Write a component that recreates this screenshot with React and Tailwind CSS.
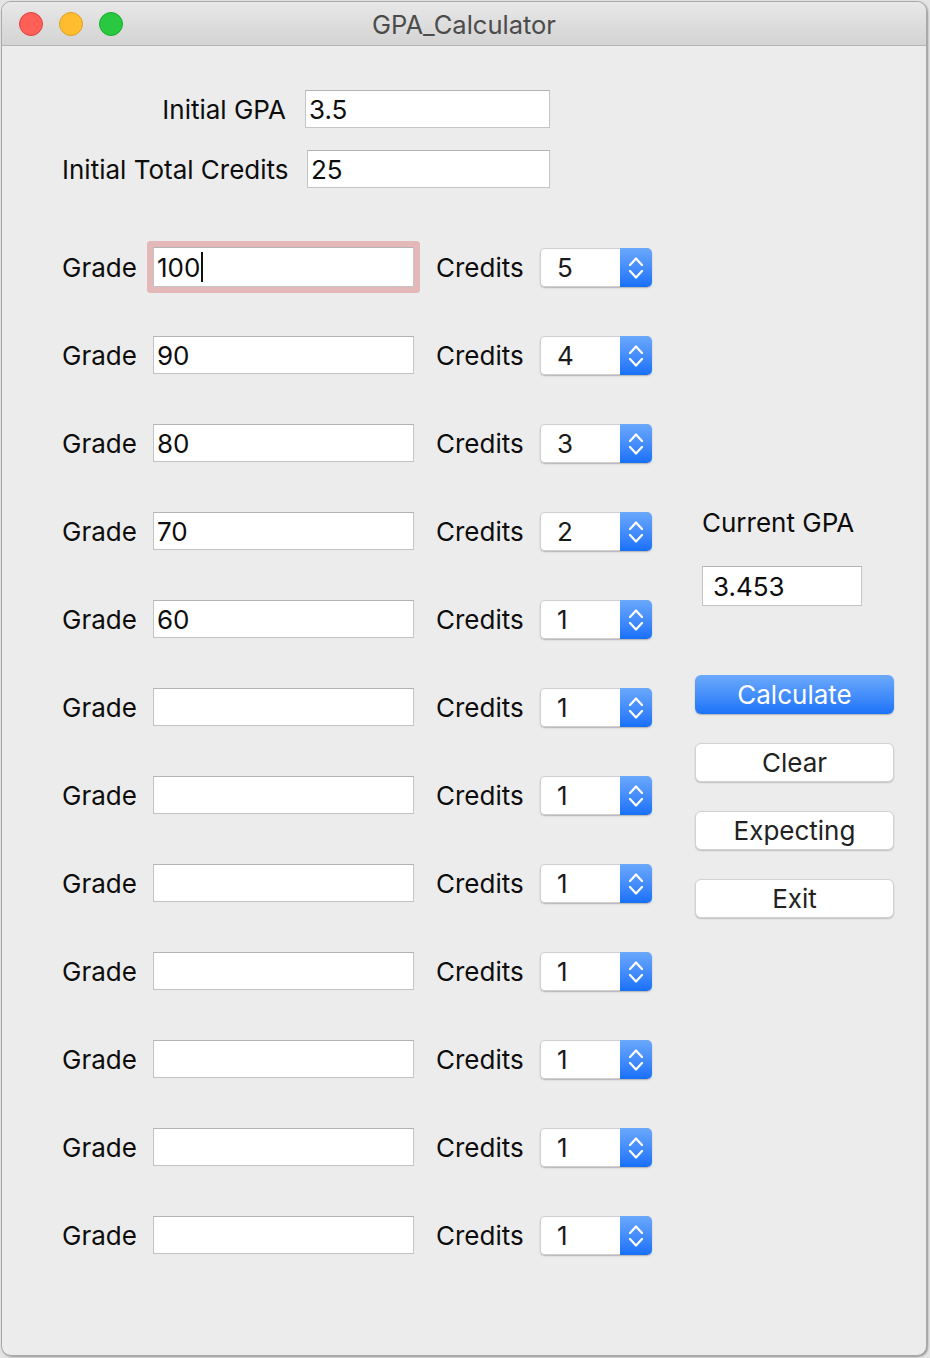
import React from "react";

const font = { fontFamily: "Inter, 'Liberation Sans', sans-serif" };

const rows = [
  { g: "100", c: "5", focus: true },
  { g: "90", c: "4" },
  { g: "80", c: "3" },
  { g: "70", c: "2" },
  { g: "60", c: "1" },
  { g: "", c: "1" },
  { g: "", c: "1" },
  { g: "", c: "1" },
  { g: "", c: "1" },
  { g: "", c: "1" },
  { g: "", c: "1" },
  { g: "", c: "1" },
];

function Field({ value, className = "", caret = false, pad = "pl-[3px]" }) {
  return (
    <div
      className={`bg-white border border-[#c4c4c4] border-t-[#b3b3b3] flex items-center ${pad} text-[26px] text-[#0d0d0d] ${className}`}
    >
      <span>{value}</span>
      {caret && <span className="inline-block w-[2px] h-[30px] bg-[#111] ml-[1px]" />}
    </div>
  );
}

function Spin({ value }) {
  return (
    <div className="flex w-[112px] h-[39px] rounded-[5px] shadow-[0_1px_1.5px_rgba(0,0,0,0.25)]">
      <div className="flex-1 bg-white border border-[#d0d0d0] border-r-0 rounded-l-[5px] flex items-center pl-[16px] text-[26px] text-[#1a1a1a]">
        {value}
      </div>
      <div className="w-[32px] rounded-r-[5px] bg-gradient-to-b from-[#6aa8fb] to-[#1870f9]">
        <svg width="32" height="39" viewBox="0 0 32 39" fill="none" stroke="white" strokeWidth="2.2" strokeLinecap="round" strokeLinejoin="round">
          <polyline points="10,17 16,10.5 22,17" />
          <polyline points="10,23 16,29.5 22,23" />
        </svg>
      </div>
    </div>
  );
}

function Btn({ children, primary }) {
  return (
    <div
      className={
        primary
          ? "w-[199px] h-[39px] rounded-[6px] bg-gradient-to-b from-[#6ba9fb] to-[#1a72f9] text-white flex items-center justify-center text-[26px] shadow-[0_1px_1.5px_rgba(0,0,0,0.25)]"
          : "w-[199px] h-[39px] rounded-[6px] bg-white border border-[#d2d2d2] text-[#222] flex items-center justify-center text-[26px] shadow-[0_1px_1.5px_rgba(0,0,0,0.2)]"
      }
    >
      {children}
    </div>
  );
}

export default function App() {
  return (
    <div className="w-[930px] h-[1358px] bg-[#e4e4e4] pt-[1px] pl-[1px] overflow-hidden" style={font}>
      <div className="w-[926px] h-[1355px] bg-[#ececec] border border-[#a9a9a9] rounded-[10px] overflow-hidden shadow-[1px_1px_2px_rgba(0,0,0,0.35)]">
        {/* Title bar */}
        <div className="relative h-[44px] bg-gradient-to-b from-[#e8e8e8] to-[#d3d3d3] border-b border-[#b5b5b5] flex items-center justify-center">
          <div className="absolute left-[17px] top-[10px] flex gap-[16px]">
            <div className="w-[24px] h-[24px] rounded-full bg-[#fe5f57] border border-[#e0443e]" />
            <div className="w-[24px] h-[24px] rounded-full bg-[#febc2e] border border-[#dea123]" />
            <div className="w-[24px] h-[24px] rounded-full bg-[#28c840] border border-[#1aab29]" />
          </div>
          <span className="text-[25.5px] text-[#4b4b4b] mt-[3px]">GPA_Calculator</span>
        </div>

        {/* Body */}
        <div className="flex">
          <div className="w-[693px] pl-[60px]">
            <div className="flex items-center mt-[44px] h-[38px]">
              <div className="w-[243px] pr-[19px] text-right text-[26px] text-[#0d0d0d]">Initial GPA</div>
              <Field value="3.5" className="w-[245px] h-[38px]" />
            </div>
            <div className="flex items-center mt-[22px] h-[38px]">
              <div className="w-[245px] text-[26px] text-[#0d0d0d] whitespace-nowrap">Initial Total Credits</div>
              <Field value="25" className="w-[243px] h-[38px]" />
            </div>

            <div className="mt-[35px]">
              {rows.map((r, i) => (
                <div key={i} className="flex items-center h-[88px]">
                  <div className="w-[91px] text-[26px] text-[#0d0d0d]">Grade</div>
                  {r.focus ? (
                    <Field
                      value={r.g}
                      caret
                      className="w-[261px] h-[40px] rounded-[1px] border-[#b89a9b] shadow-[0_0_0_6px_#e4b7b9]"
                    />
                  ) : (
                    <Field value={r.g} className="w-[261px] h-[38px]" />
                  )}
                  <div className="w-[104px] ml-[22px] text-[26px] text-[#0d0d0d]">Credits</div>
                  <Spin value={r.c} />
                </div>
              ))}
            </div>
          </div>

          <div className="flex flex-col">
            <div className="mt-[461px] ml-[7px] h-[32px] leading-[32px] text-[26px] text-[#0d0d0d]">Current GPA</div>
            <Field value="3.453" pad="pl-[10px]" className="mt-[27px] ml-[7px] w-[160px] h-[40px]" />
            <div className="mt-[69px] flex flex-col gap-[29px]">
              <Btn primary>Calculate</Btn>
              <Btn>Clear</Btn>
              <Btn>Expecting</Btn>
              <Btn>Exit</Btn>
            </div>
          </div>
        </div>
      </div>
    </div>
  );
}
